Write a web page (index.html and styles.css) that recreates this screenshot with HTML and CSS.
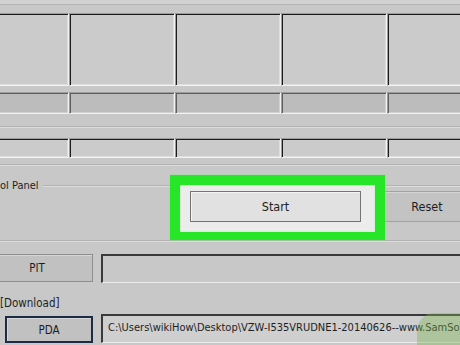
FILE: index.html
```html
<!DOCTYPE html>
<html lang="en">

<head>
    <meta charset="UTF-8">
    <meta name="viewport" content="width=device-width, initial-scale=1.0">
    <title>Odin</title>
    <link rel="stylesheet" href="styles.css">
</head>

<body>
    <div class="screen">
        <div class="top-strip"></div>

        <!-- cajas de estado de los puertos -->
        <div class="cells cells-big">
            <div class="cell"></div>
            <div class="cell"></div>
            <div class="cell"></div>
            <div class="cell"></div>
            <div class="cell"></div>
        </div>
        <div class="cells cells-mid">
            <div class="cell"></div>
            <div class="cell"></div>
            <div class="cell"></div>
            <div class="cell"></div>
            <div class="cell"></div>
        </div>
        <div class="rule rule-a"></div>
        <div class="cells cells-small">
            <div class="cell"></div>
            <div class="cell"></div>
            <div class="cell"></div>
            <div class="cell"></div>
            <div class="cell"></div>
        </div>
        <div class="rule rule-b"></div>

        <!-- panel de control -->
        <div class="group-head">
            <span class="group-title">ol Panel</span>
            <span class="group-line"></span>
        </div>
        <div class="actions">
            <div class="highlight"></div>
            <button class="btn btn-start">Start</button>
            <button class="btn btn-reset">Reset</button>
        </div>
        <div class="rule rule-c"></div>

        <!-- archivos -->
        <div class="file-row file-row-pit">
            <button class="btn btn-pit">PIT</button>
            <div class="field"></div>
        </div>
        <div class="section-label">[Download]</div>
        <div class="file-row file-row-pda">
            <button class="btn btn-pda">PDA</button>
            <div class="field field-path">C:\Users\wikiHow\Desktop\VZW-I535VRUDNE1-20140626--www.SamSon</div>
        </div>

        <div class="watermark"></div>
    </div>
</body>

</html>
```

FILE: styles.css
```css
* {
    box-sizing: border-box;
}

html,
body {
    margin: 0;
}

body {
    background-color: #c8c8c8;
    font-family: "DejaVu Sans Condensed", "DejaVu Sans", "Liberation Sans", sans-serif;
    font-size: 11px;
    color: #1e1e1e;
}

.screen {
    position: relative;
    width: 460px;
    height: 345px;
    overflow: hidden;
}

.top-strip {
    height: 5px;
    background-color: #d2d2d2;
    border-bottom: 1px solid #b4b4b4;
}

/* filas de cajas */
.cells {
    display: flex;
    margin-left: -37px;
}

.cell {
    flex: 0 0 106px;
    background-color: #cbcbcb;
    border-top: 1px solid #9c9c9c;
    border-left: 1px solid #9c9c9c;
    border-right: 1px solid #f2f2f2;
    border-bottom: 1px solid #f2f2f2;
    box-shadow: inset 1px 1px 0 #1c1c1c, inset -1px -1px 0 #dedede;
}

.cells-big {
    margin-top: 8px;
    height: 73px;
}

.cells-mid {
    margin-top: 6px;
    height: 22px;
}

.cells-mid .cell {
    background-color: #bcbcbc;
    box-shadow: inset 1px 1px 0 #5e5e5e, inset -1px -1px 0 #d0d0d0;
}

.cells-small {
    margin-top: 10px;
    height: 20px;
}

.rule {
    height: 2px;
    border-top: 1px solid #b2b2b2;
    border-bottom: 1px solid #dcdcdc;
}

.rule-a {
    margin-top: 12px;
}

.rule-b {
    margin-top: 6px;
}

.rule-c {
    margin-top: 18px;
}

/* panel de control */
.group-head {
    display: flex;
    align-items: center;
    gap: 4px;
    margin-top: 14px;
    height: 12px;
    line-height: 12px;
}

.group-line {
    flex: 1;
    height: 2px;
    border-top: 1px solid #b2b2b2;
    border-bottom: 1px solid #dcdcdc;
}

.actions {
    position: relative;
    display: flex;
    gap: 7px;
    margin-top: -1px;
    height: 31px;
    padding-left: 190px;
}

.btn {
    font-family: inherit;
    font-size: 11.5px;
    color: #1e1e1e;
    padding: 0;
    margin: 0;
    flex: none;
}

.btn-start {
    position: relative;
    z-index: 2;
    width: 171px;
    height: 31px;
    font-size: 12.5px;
    background-color: #e1e1e1;
    border: 1px solid #747474;
    box-shadow: inset 1px 1px 0 #f4f4f4;
}

.btn-reset {
    width: 118px;
    height: 31px;
    font-size: 12.5px;
    background-color: #c3c3c3;
    border: 1px solid #a2a2a2;
    box-shadow: inset 1px 1px 0 #d4d4d4;
}

/* recuadro verde de la captura */
.highlight {
    position: absolute;
    z-index: 1;
    left: 170px;
    top: -16px;
    width: 215px;
    height: 65px;
    background-color: #ececec;
    border: 10px solid #27e627;
    border-bottom-width: 8px;
    box-shadow: 0 0 2px #7cf07c, inset 0 0 2px #9cf09c;
}

/* archivos */
.file-row {
    display: flex;
    gap: 8px;
    height: 29px;
}

.file-row-pit {
    margin-top: 12px;
}

.file-row-pda {
    margin-top: 4px;
    align-items: flex-end;
}

.btn-pit {
    margin-left: -19px;
    width: 112px;
    height: 28px;
    background-color: #c1c1c1;
    border: 1px solid #8e8e8e;
    box-shadow: inset 1px 1px 0 #d6d6d6;
}

.btn-pda {
    margin-left: 5px;
    width: 88px;
    height: 27px;
    background-color: #c1c1c1;
    border: 2px solid #1d2b46;
    box-shadow: inset 1px 1px 0 #d8d8d8;
}

.field {
    flex: 0 0 380px;
    height: 29px;
    background-color: #c8c8c8;
    border-top: 2px solid #3a3a3a;
    border-left: 2px solid #3a3a3a;
    border-right: 1px solid #ececec;
    border-bottom: 1px solid #ececec;
}

.field-path {
    background-color: #cfcfcf;
    padding-left: 5px;
    line-height: 24px;
    white-space: nowrap;
    overflow: hidden;
}

.section-label {
    margin-top: 13px;
    height: 14px;
    line-height: 14px;
    font-size: 11.5px;
}

.watermark {
    position: absolute;
    left: 417px;
    top: 313px;
    width: 60px;
    height: 40px;
    border-top-left-radius: 18px;
    background-color: rgba(125, 180, 80, 0.4);
}
```
